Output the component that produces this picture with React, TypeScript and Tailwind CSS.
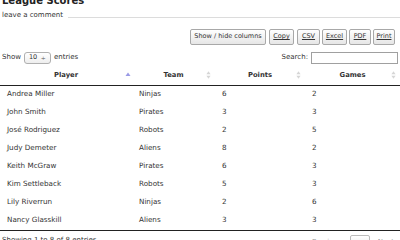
import React from 'react';

type Row = { player: string; team: string; points: number; games: number };

const ROWS: Row[] = [
  { player: 'Andrea Miller', team: 'Ninjas', points: 6, games: 2 },
  { player: 'John Smith', team: 'Pirates', points: 3, games: 3 },
  { player: 'José Rodriguez', team: 'Robots', points: 2, games: 5 },
  { player: 'Judy Demeter', team: 'Aliens', points: 8, games: 2 },
  { player: 'Keith McGraw', team: 'Pirates', points: 6, games: 3 },
  { player: 'Kim Settleback', team: 'Robots', points: 5, games: 3 },
  { player: 'Lily Riverrun', team: 'Ninjas', points: 2, games: 6 },
  { player: 'Nancy Glasskill', team: 'Aliens', points: 3, games: 3 },
];

function SortIcon({ active }: { active?: boolean }) {
  if (active) {
    return (
      <svg viewBox="0 0 6 8" className="w-[6px] h-[8px]">
        <path d="M3 1.5 L5.5 5 L0.5 5 Z" fill="#9a9ae6" />
      </svg>
    );
  }
  return (
    <svg viewBox="0 0 6 10" className="w-[5px] h-[9px]">
      <path d="M3 0.5 L5.5 4 L0.5 4 Z" fill="#d6d6d6" />
      <path d="M3 9.5 L5.5 6 L0.5 6 Z" fill="#d6d6d6" />
    </svg>
  );
}

const btn =
  'h-[16px] px-0 border border-[#a8a8a8] rounded-[2px] bg-gradient-to-b from-white to-[#e6e6e6] text-[6.5px] text-[#333] leading-none text-center';

export default function App() {
  const headers = [
    { label: 'Player', active: true },
    { label: 'Team' },
    { label: 'Points' },
    { label: 'Games' },
  ];
  return (
    <div className="w-[400px] h-[240px] overflow-hidden bg-white text-[#333] font-['DejaVu_Sans',sans-serif]">
      {/* Title, cut off by the top edge */}
      <h1 className="text-[10px] font-bold leading-none -mt-[4.5px] ml-[2px] text-[#222]">League Scores</h1>
      <div className="flex items-end mt-[6px] pl-[2px]">
        <span className="text-[7px] leading-none">leave a comment</span>
        <div className="flex-1 ml-[5px] mb-[1px] border-b border-[#dcdcdc]" />
      </div>

      {/* Export buttons */}
      <div className="flex justify-end gap-[2px] pr-[5px] mt-[10px]">
        <button className={`${btn} w-[76px]`}>Show / hide columns</button>
        <button className={`${btn} w-[25px] underline ml-[1px]`}>Copy</button>
        <button className={`${btn} w-[23px] underline ml-[1px]`}>CSV</button>
        <button className={`${btn} w-[25px] underline`}>Excel</button>
        <button className={`${btn} w-[22px] underline`}>PDF</button>
        <button className={`${btn} w-[22px] underline`}>Print</button>
      </div>

      {/* Length + search */}
      <div className="flex items-center justify-between mt-[7px] px-[2px] text-[7px]">
        <div className="flex items-center gap-[3px]">
          <span>Show</span>
          <div className="flex items-center justify-between w-[27px] h-[12px] px-[4px] border border-[#b0b0b0] rounded-[3px] bg-gradient-to-b from-white to-[#eee]">
            <span className="text-[6.5px]">10</span>
            <span className="text-[6px] text-[#555]">÷</span>
          </div>
          <span>entries</span>
        </div>
        <div className="flex items-center gap-[3px]">
          <span>Search:</span>
          <div className="w-[87px] h-[12px] border border-[#a0a0a0] bg-white" />
        </div>
      </div>

      {/* Table */}
      <table className="w-full table-fixed border-collapse mt-[2px]">
        <colgroup>
          <col className="w-[132px]" />
          <col className="w-[83px]" />
          <col className="w-[90px]" />
          <col />
        </colgroup>
        <thead>
          <tr className="h-[20px] border-b-[1.5px] border-[#222]">
            {headers.map((h) => (
              <th key={h.label} className="relative p-0 text-[6.8px] font-bold text-center">
                {h.label}
                <span className={`absolute top-1/2 -translate-y-1/2 flex ${h.active ? 'right-[1px]' : 'right-[4px]'}`}>
                  <SortIcon active={h.active} />
                </span>
              </th>
            ))}
          </tr>
        </thead>
        <tbody className="text-[7.2px]">
          {ROWS.map((r) => (
            <tr key={r.player} className="h-[18px]">
              <td className="pl-[7px]">{r.player}</td>
              <td className="pl-[7px]">{r.team}</td>
              <td className="pl-[7px]">{r.points}</td>
              <td className="pl-[7px]">{r.games}</td>
            </tr>
          ))}
        </tbody>
      </table>
      <div className="border-t-[1.5px] border-[#222]" />

      {/* Footer */}
      <div className="flex items-start justify-between mt-[4px] px-[2px] text-[7px]">
        <span>Showing 1 to 8 of 8 entries</span>
        <div className="flex items-start gap-[8px] pr-[4px]">
          <span className="text-[#999] mt-[2px]">Previous</span>
          <span className="w-[20px] h-[14px] border border-[#bbb] rounded-[2px] bg-gradient-to-b from-white to-[#e6e6e6] text-center pt-[2px]">1</span>
          <span className="text-[#999] mt-[2px]">Next</span>
        </div>
      </div>
    </div>
  );
}
